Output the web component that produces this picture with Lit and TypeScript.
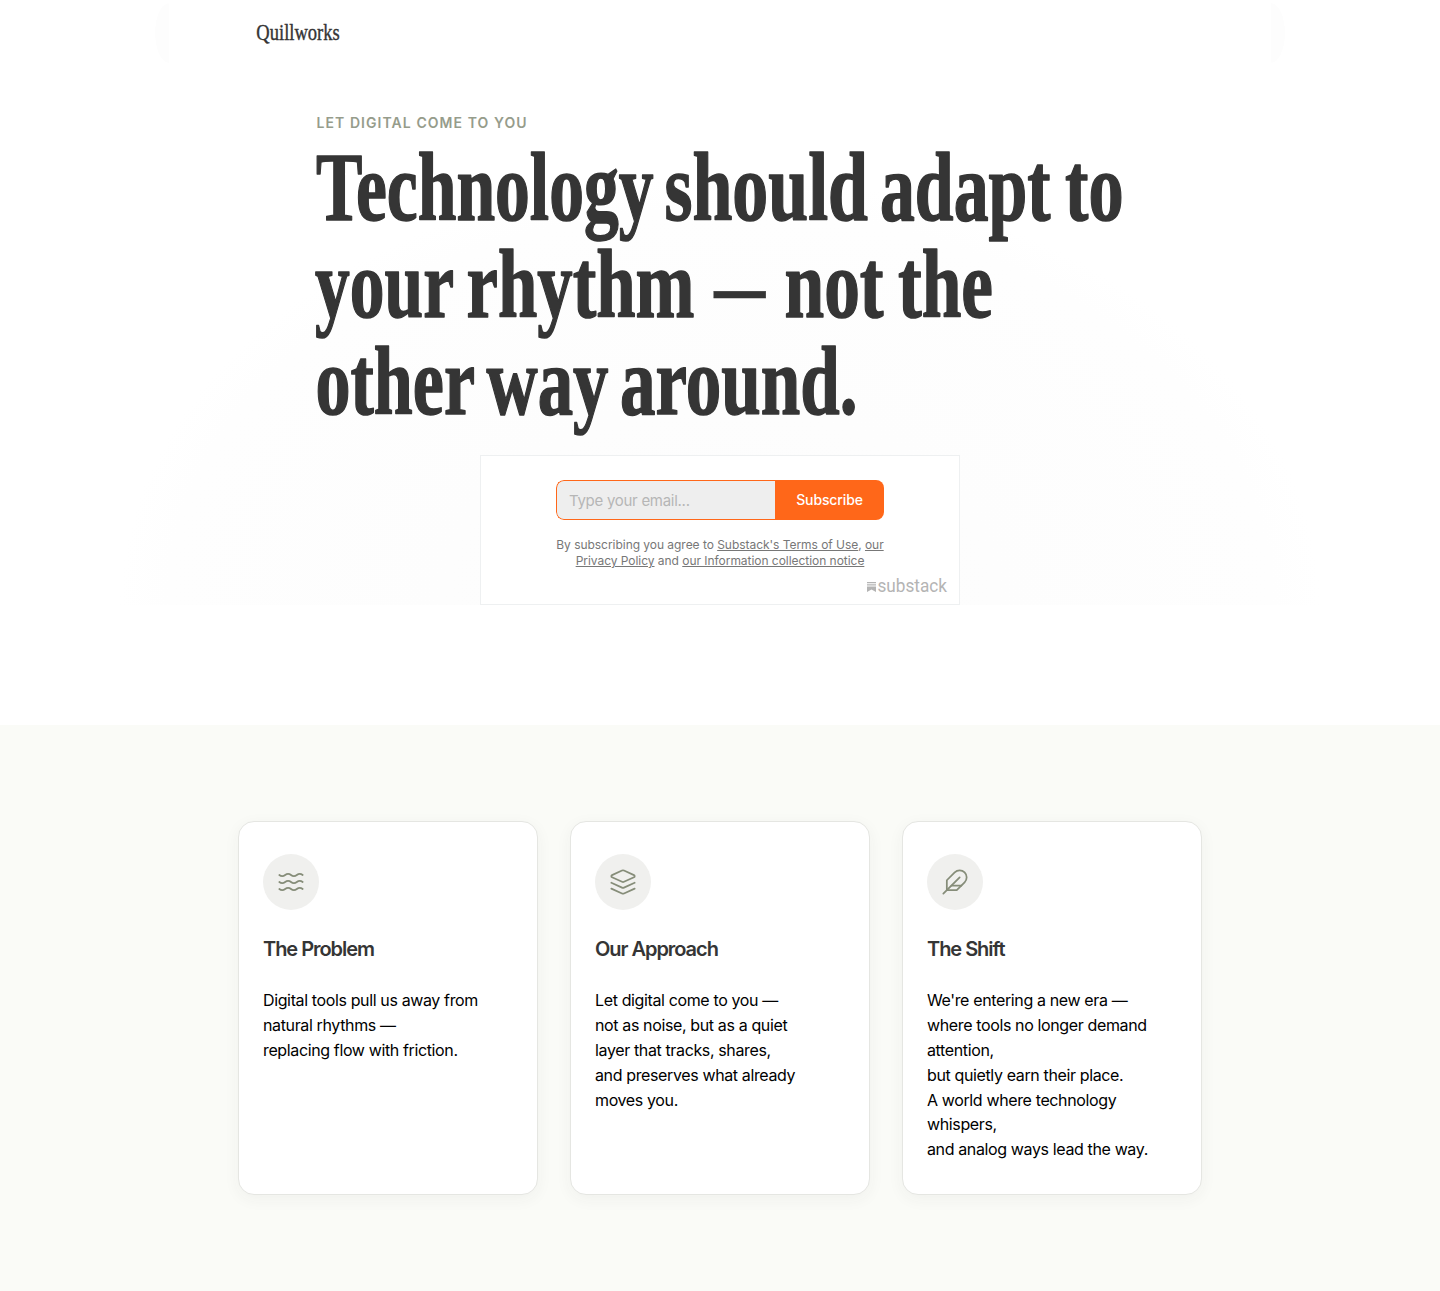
import { LitElement, html, css, svg } from "lit";
import { customElement } from "lit/decorators.js";

type Word = [text: string, x: number, width: number];

const headline: { baseline: number; words: Word[] }[] = [
  { baseline: 219.5, words: [["Technology", 316, 337.5], ["should", 664.5, 203.5], ["adapt", 880, 170.5], ["to", 1065, 58.5]] },
  { baseline: 316.5, words: [["your", 315, 139], ["rhythm", 466.5, 228], ["—", 714, 51.5], ["not", 784.5, 99], ["the", 898, 95]] },
  { baseline: 413.5, words: [["other", 315.5, 159.5], ["way", 486.5, 122], ["around.", 620, 237.5]] },
];

const waves = svg`
  <path d="M2 6c.6.5 1.2 1 2.5 1C7 7 7 5 9.5 5c2.6 0 2.4 2 5 2 2.5 0 2.5-2 5-2 1.3 0 1.9.5 2.5 1"/>
  <path d="M2 12c.6.5 1.2 1 2.5 1 2.5 0 2.5-2 5-2 2.6 0 2.4 2 5 2 2.5 0 2.5-2 5-2 1.3 0 1.9.5 2.5 1"/>
  <path d="M2 18c.6.5 1.2 1 2.5 1 2.5 0 2.5-2 5-2 2.6 0 2.4 2 5 2 2.5 0 2.5-2 5-2 1.3 0 1.9.5 2.5 1"/>`;
const layers = svg`
  <path d="m12.83 2.18a2 2 0 0 0-1.66 0L2.6 6.08a1 1 0 0 0 0 1.83l8.58 3.91a2 2 0 0 0 1.66 0l8.58-3.9a1 1 0 0 0 0-1.83Z"/>
  <path d="m22 17.65-9.17 4.16a2 2 0 0 1-1.66 0L2 17.65"/>
  <path d="m22 12.65-9.17 4.16a2 2 0 0 1-1.66 0L2 12.65"/>`;
const feather = svg`
  <path d="M20.24 12.24a6 6 0 0 0-8.49-8.49L5 10.5V19h8.5z"/>
  <path d="M16 8 2 22"/>
  <path d="M17.5 15H9"/>`;

const cards = [
  { icon: waves, title: "The Problem", lines: ["Digital tools pull us away from natural rhythms —", "replacing flow with friction."] },
  { icon: layers, title: "Our Approach", lines: ["Let digital come to you —", "not as noise, but as a quiet", "layer that tracks, shares,", "and preserves what already moves you."] },
  { icon: feather, title: "The Shift", lines: ["We're entering a new era —", "where tools no longer demand attention,", "but quietly earn their place.", "A world where technology whispers,", "and analog ways lead the way."] },
];

@customElement("app-root")
export class AppRoot extends LitElement {
  static styles = css`
    :host { display: block; min-height: 1291px; background: #fafbf7; font-family: Inter, "Liberation Sans", sans-serif; color: #000; }
    * { box-sizing: border-box; margin: 0; padding: 0; }
    svg { display: block; overflow: visible; }
    .top { background: #fff; height: 725px; }
    .hero { height: 604.5px; background: radial-gradient(ellipse 600px 430px at 50% 100%, #fcfcfc 0, #fefefe 92%, #fff 100%); }
    header {
      height: 72px; width: 1130px; margin: 0 auto; padding: 15px 0 0 101px;
      background:
        radial-gradient(ellipse 14px 30px at 100% 50%, #fdfdfd 98%, transparent 100%) 0 0 / 14px 66px no-repeat,
        radial-gradient(ellipse 14px 30px at 0 50%, #fdfdfd 98%, transparent 100%) 100% 0 / 14px 66px no-repeat;
    }
    .serif { font-family: "Liberation Serif", serif; fill: #353535; stroke: #353535; stroke-linejoin: round; }
    .brand { font-size: 24px; stroke-width: 0.4px; }
    .headline { font-size: 98px; stroke-width: 1.5px; }
    .dash { stroke-width: 0.4px; }
    .eyebrow { padding: 42px 0 0 316.500px; font-size: 14px; line-height: 17px; font-weight: 600; letter-spacing: 1.06px; color: #969c8b; text-transform: uppercase; }
    h1 { width: 820px; height: 290px; margin: 19px 0 0 310px; }
    .embed { width: 480px; height: 150px; margin: 15px auto 0; background: #fff; border: 1px solid #eef0f1; display: flex; flex-direction: column; align-items: center; padding-top: 24px; }
    form { display: flex; width: 328px; height: 40px; border-radius: 8px; overflow: hidden; }
    input { width: 219px; height: 40px; flex: none; border: 1px solid #ff6719; border-right: 0; border-radius: 8px 0 0 8px; background: #eee; padding: 1px 12px 0; font: 15px Inter, sans-serif; letter-spacing: -0.28px; outline: 0; }
    input::placeholder { color: #b6b6b6; opacity: 1; }
    button { flex: 1; border: 0; background: #ff6719; color: #fff; font: 500 14px Inter, sans-serif; letter-spacing: -0.12px; padding-bottom: 2px; }
    .terms { margin-top: 17px; width: 340px; font-size: 12px; line-height: 16px; text-align: center; color: #777; letter-spacing: -0.04px; white-space: nowrap; }
    .terms a { text-decoration: underline; color: inherit; }
    .powered { align-self: flex-end; margin: 7px 12px 0 0; }
    .powered text { font: 19px Roboto, sans-serif; fill: #b4b4b4; }
    .features { padding: 96px 238px; display: grid; grid-template-columns: repeat(3, 300px); gap: 32px; }
    .card { height: 374px; background: #fff; border: 1px solid #e5e6e2; border-radius: 16px; padding: 32px 24px; box-shadow: 0 4px 16px rgba(60, 64, 50, 0.05); }
    .icon { width: 56px; height: 56px; border-radius: 50%; background: #f0f0ee; display: grid; place-items: center; }
    .icon svg { fill: none; stroke: #868d79; stroke-width: 1.5; stroke-linecap: round; stroke-linejoin: round; }
    h2 { margin-top: 25px; font-size: 20px; line-height: 28px; font-weight: 600; letter-spacing: -1.04px; color: #353535; }
    .card p { margin-top: 25.4px; font-size: 16px; line-height: 24.8px; letter-spacing: -0.37px; }
  `;

  render() {
    return html`
      <div class="top">
        <section class="hero">
          <header>
            <svg width="86" height="32" viewBox="256 16 86 32">
              <text class="serif brand" x="256.3" y="40.5" textLength="83.5" lengthAdjust="spacingAndGlyphs">Quillworks</text>
            </svg>
          </header>
          <p class="eyebrow">Let digital come to you</p>
          <h1>
            <svg width="820" height="290" viewBox="310 150 820 290">
              ${headline.map(({ baseline, words }) => words.map(([text, x, width]) => svg`
                <text class="serif headline ${text === "—" ? "dash" : ""}" x=${x} y=${baseline} textLength=${width} lengthAdjust="spacingAndGlyphs">${text}</text>`))}
            </svg>
          </h1>
          <div class="embed">
            <form>
              <input type="email" placeholder="Type your email..." />
              <button type="button">Subscribe</button>
            </form>
            <p class="terms">By subscribing you agree to <a>Substack's Terms of Use</a>, <a>our</a><br /><a>Privacy Policy</a> and <a>our Information collection notice</a></p>
            <svg class="powered" width="81" height="20" viewBox="866 576 81 20">
              <path fill="#b4b4b4" d="M867 582h9v1.2h-9zM867 584.2h9v1.2h-9zM867 586.5h9v5.5l-4.5-2.5-4.5 2.5z"/>
              <text x="877.5" y="592" textLength="69.5" lengthAdjust="spacingAndGlyphs">substack</text>
            </svg>
          </div>
        </section>
      </div>
      <section class="features">
        ${cards.map((card) => html`
          <article class="card">
            <div class="icon"><svg width="28" height="28" viewBox="0 0 24 24">${card.icon}</svg></div>
            <h2>${card.title}</h2>
            <p>${card.lines.map((line, i) => html`${i ? html`<br />` : ""}${line}`)}</p>
          </article>`)}
      </section>`;
  }
}
